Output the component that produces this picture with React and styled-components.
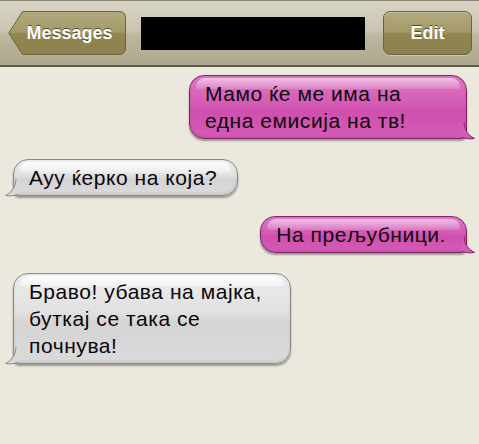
import React from "react";
import styled, { createGlobalStyle, css } from "styled-components";

const Global = createGlobalStyle`
  html, body { margin: 0; padding: 0; background: #ebe8dd; }
  body { font-family: "Liberation Sans", Arial, sans-serif; }
`;

const Screen = styled.div`
  width: 479px;
  height: 444px;
  background: #ebe8dd;
  overflow: hidden;
`;

const NavBar = styled.div`
  box-sizing: border-box;
  height: 67px;
  display: flex;
  align-items: center;
  padding: 0 7px 0 8px;
  border-top: 1px solid #8a8570;
  border-bottom: 2px solid #5f5a45;
  background: linear-gradient(#d8d4c4 0%, #cbc6b2 45%, #bcb69e 55%, #ada78d 100%);
`;

const BackButton = styled.div`
  position: relative;
  width: 118px;
  height: 44px;
  display: flex;
  align-items: center;
  justify-content: center;
  padding-left: 5px;
  box-sizing: border-box;
  flex: none;
`;

const ButtonShape = styled.svg`
  position: absolute;
  inset: 0;
`;

const ButtonLabel = styled.span`
  position: relative;
  color: #fff;
  font-weight: bold;
  font-size: 18px;
  text-shadow: 0 -1px 0 rgba(60, 55, 30, 0.8);
`;

const TitleBlock = styled.div`
  width: 224px;
  height: 33px;
  background: #000;
  margin-left: 15px;
  flex: none;
`;

const EditButton = styled.div`
  margin-left: 18px;
  box-sizing: border-box;
  width: 89px;
  height: 44px;
  border-radius: 7px;
  border: 1px solid #6a633f;
  display: flex;
  align-items: center;
  justify-content: center;
  background: linear-gradient(#b2a97f 0%, #a39969 48%, #91864f 52%, #8d824d 100%);
  box-shadow: inset 0 1px 0 rgba(255, 255, 255, 0.25), 0 1px 0 rgba(255, 255, 255, 0.35);
  flex: none;
`;

const Thread = styled.div`
  display: flex;
  flex-direction: column;
  gap: 20px;
  padding: 8px 12px 0 13px;
`;

const Row = styled.div`
  display: flex;
  justify-content: ${(p) => (p.$mine ? "flex-end" : "flex-start")};
`;

const pinkStyle = css`
  background: linear-gradient(#dd78c3 0%, #d45bb5 45%, #cf4fae 55%, #d45cb6 100%);
  border-color: #82236a;
  &::before {
    background: linear-gradient(rgba(255, 255, 255, 0.55), rgba(255, 255, 255, 0.15));
  }
`;

const grayStyle = css`
  background: linear-gradient(#ececec 0%, #e0e0e0 45%, #d4d4d4 55%, #dadada 100%);
  border-color: #8a8a8a;
  &::before {
    background: linear-gradient(rgba(255, 255, 255, 0.9), rgba(255, 255, 255, 0.3));
  }
`;

const Bubble = styled.div`
  position: relative;
  box-sizing: border-box;
  max-width: 278px;
  padding: 4px 20px 4px 15px;
  border: 1px solid;
  border-radius: 15px;
  ${(p) => (p.$mine ? "border-bottom-right-radius: 6px;" : "border-bottom-left-radius: 6px;")}
  font-size: 21px;
  letter-spacing: 0.55px;
  line-height: 27px;
  color: #0c050c;
  box-shadow: 0 2px 2px rgba(0, 0, 0, 0.35), inset 0 -2px 3px rgba(0, 0, 0, 0.08);
  ${(p) => (p.$mine ? pinkStyle : grayStyle)}
  &::before {
    content: "";
    position: absolute;
    left: 6px;
    right: 6px;
    top: 2px;
    height: 11px;
    border-radius: 12px 12px 3px 3px;
  }
`;

const BubbleText = styled.span`
  position: relative;
`;

const Tail = styled.svg`
  position: absolute;
  bottom: -2px;
  ${(p) => (p.$mine ? "right: -10px;" : "left: -10px; transform: scaleX(-1);")}
`;

const messages = [
  { mine: true, text: "Мамо ќе ме има на една емисија на тв!" },
  { mine: false, text: "Ауу ќерко на која?" },
  { mine: true, text: "На прељубници." },
  { mine: false, text: "Браво! убава на мајка, буткај се така се почнува!" },
];

function BubbleTail({ mine }) {
  const fill = mine ? "#d45cb6" : "#d9d9d9";
  const stroke = mine ? "#82236a" : "#8a8a8a";
  return (
    <Tail $mine={mine} width="14" height="18" viewBox="0 0 14 18">
      <path d="M0,0 L2,0 C2.5,8 5.5,13 12.5,16.5 C8,17.5 4,16.5 0,15 Z" fill={fill} />
      <path d="M2,0 C2.5,8 5.5,13 12.5,16.5 C8,17.5 4,16.5 0,15.5" fill="none" stroke={stroke} strokeWidth="1" />
    </Tail>
  );
}

export default function App() {
  return (
    <Screen>
      <Global />
      <NavBar>
        <BackButton>
          <ButtonShape width="118" height="44" viewBox="0 0 118 44">
            <defs>
              <linearGradient id="bbg" x1="0" y1="0" x2="0" y2="1">
                <stop offset="0" stopColor="#b2a97f" />
                <stop offset="0.48" stopColor="#a39969" />
                <stop offset="0.52" stopColor="#91864f" />
                <stop offset="1" stopColor="#8d824d" />
              </linearGradient>
            </defs>
            <path
              d="M14.5,0.5 H111 Q117.5,0.5 117.5,7 V37 Q117.5,43.5 111,43.5 H14.5 L0.8,22 Z"
              fill="url(#bbg)"
              stroke="#6a633f"
              strokeWidth="1"
            />
          </ButtonShape>
          <ButtonLabel>Messages</ButtonLabel>
        </BackButton>
        <TitleBlock />
        <EditButton>
          <ButtonLabel>Edit</ButtonLabel>
        </EditButton>
      </NavBar>
      <Thread>
        {messages.map((m, i) => (
          <Row key={i} $mine={m.mine}>
            <Bubble $mine={m.mine}>
              <BubbleText>{m.text}</BubbleText>
              <BubbleTail mine={m.mine} />
            </Bubble>
          </Row>
        ))}
      </Thread>
    </Screen>
  );
}
